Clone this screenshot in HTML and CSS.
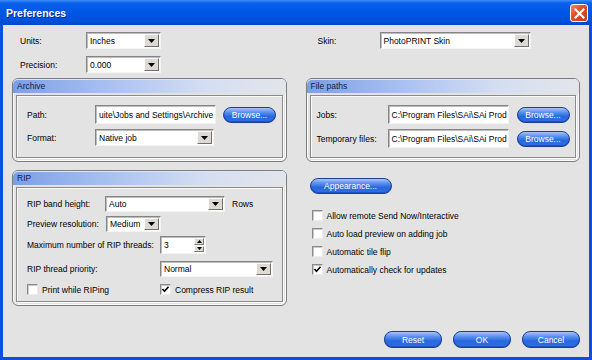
FILE: index.html
```html
<!DOCTYPE html>
<html lang="en">
<head>
	<meta charset="UTF-8">
	<title>Preferences</title>
<link rel="stylesheet" href="styles.css">
</head>
<body>
	<div class="window">
		<header class="titlebar">
			<span class="title">Preferences</span>
			<span class="close">
				<svg width="11" height="11" viewBox="0 0 11 11"><path d="M1.5 1.5 L9.5 9.5 M9.5 1.5 L1.5 9.5" stroke="#fff" stroke-width="2.2" stroke-linecap="square"/></svg>
			</span>
		</header>
		<main class="body">
			<section class="top">
				<div class="field">
					<span class="lbl">Units:</span>
					<div class="combo w-units"><span class="val">Inches</span><span class="arrow"><svg width="7" height="4" viewBox="0 0 7 4"><path d="M0 0 H7 L3.5 4 Z"/></svg></span></div>
				</div>
				<div class="field skin">
					<span class="lbl">Skin:</span>
					<div class="combo w-skin"><span class="val">PhotoPRINT Skin</span><span class="arrow"><svg width="7" height="4" viewBox="0 0 7 4"><path d="M0 0 H7 L3.5 4 Z"/></svg></span></div>
				</div>
				<div class="field">
					<span class="lbl">Precision:</span>
					<div class="combo w-units"><span class="val">0.000</span><span class="arrow"><svg width="7" height="4" viewBox="0 0 7 4"><path d="M0 0 H7 L3.5 4 Z"/></svg></span></div>
				</div>
			</section>

			<section class="pair groups">
				<div class="group">
					<div class="group-head">Archive</div>
					<div class="group-body archive">
						<div class="row">
							<span class="lbl-archive">Path:</span>
							<div class="txt w-path">uite\Jobs and Settings\Archive</div>
							<button class="pill w-browse">Browse...</button>
						</div>
						<div class="row">
							<span class="lbl-archive">Format:</span>
							<div class="combo w-format"><span class="val">Native job</span><span class="arrow"><svg width="7" height="4" viewBox="0 0 7 4"><path d="M0 0 H7 L3.5 4 Z"/></svg></span></div>
						</div>
					</div>
				</div>
				<div class="group">
					<div class="group-head">File paths</div>
					<div class="group-body paths">
						<div class="row">
							<span class="lbl-paths">Jobs:</span>
							<div class="txt w-path">C:\Program Files\SAi\SAi Prod</div>
							<button class="pill w-browse">Browse...</button>
						</div>
						<div class="row">
							<span class="lbl-paths">Temporary files:</span>
							<div class="txt w-path">C:\Program Files\SAi\SAi Prod</div>
							<button class="pill w-browse">Browse...</button>
						</div>
					</div>
				</div>
			</section>

			<section class="pair lower">
				<div class="group">
					<div class="group-head">RIP</div>
					<div class="group-body rip">
						<div class="row">
							<span class="lbl-band">RIP band height:</span>
							<div class="combo w-band"><span class="val">Auto</span><span class="arrow"><svg width="7" height="4" viewBox="0 0 7 4"><path d="M0 0 H7 L3.5 4 Z"/></svg></span></div>
							<span class="unit">Rows</span>
						</div>
						<div class="row">
							<span class="lbl-preview">Preview resolution:</span>
							<div class="combo w-preview"><span class="val">Medium</span><span class="arrow"><svg width="7" height="4" viewBox="0 0 7 4"><path d="M0 0 H7 L3.5 4 Z"/></svg></span></div>
						</div>
						<div class="row">
							<span class="lbl-wide">Maximum number of RIP threads:</span>
							<div class="spin">
								<span class="val">3</span>
								<span class="spin-btns">
									<span class="spin-btn"><svg width="5" height="3" viewBox="0 0 5 3"><path d="M0 3 H5 L2.5 0 Z"/></svg></span>
									<span class="spin-btn"><svg width="5" height="3" viewBox="0 0 5 3"><path d="M0 0 H5 L2.5 3 Z"/></svg></span>
								</span>
							</div>
						</div>
						<div class="row spaced">
							<span class="lbl-wide">RIP thread priority:</span>
							<div class="combo w-priority"><span class="val">Normal</span><span class="arrow"><svg width="7" height="4" viewBox="0 0 7 4"><path d="M0 0 H7 L3.5 4 Z"/></svg></span></div>
						</div>
						<div class="row spaced">
							<label class="check lbl-wide"><span class="cb"></span>Print while RIPing</label>
							<label class="check"><span class="cb"><svg width="9" height="9" viewBox="0 0 9 9"><path d="M1.5 4 L3.5 6.3 L7.5 1.8" fill="none" stroke="#000" stroke-width="1.6"/></svg></span>Compress RIP result</label>
						</div>
					</div>
				</div>
				<div class="side">
					<button class="pill w-appearance">Appearance...</button>
					<ul class="options">
						<li><label class="check"><span class="cb"></span>Allow remote Send Now/Interactive</label></li>
						<li><label class="check"><span class="cb"></span>Auto load preview on adding job</label></li>
						<li><label class="check"><span class="cb"></span>Automatic tile flip</label></li>
						<li><label class="check"><span class="cb"><svg width="9" height="9" viewBox="0 0 9 9"><path d="M1.5 4 L3.5 6.3 L7.5 1.8" fill="none" stroke="#000" stroke-width="1.6"/></svg></span>Automatically check for updates</label></li>
					</ul>
				</div>
			</section>

			<footer class="footer">
				<button class="pill w-action">Reset</button>
				<button class="pill w-action">OK</button>
				<button class="pill w-action">Cancel</button>
			</footer>
		</main>
	</div>
</body>
</html>
```

FILE: styles.css
```css
body{
	margin: 0;
	font: 8.5px "Liberation Sans", Arial, sans-serif;
	color: #000;
}
*{
	box-sizing: border-box;
}
.window{
	width: 592px;
	height: 360px;
	display: flex;
	flex-direction: column;
	background: #0b4fdf;
}
.titlebar{
	height: 25px;
	display: flex;
	align-items: center;
	justify-content: space-between;
	padding: 0 4px 0 6px;
	background: linear-gradient(#3d8ff7 0, #0a60ea 3px, #0057e5 45%, #0052dd 80%, #0046cc 100%);
	color: #fff;
}
.title{
	font-weight: bold;
	font-size: 10.5px;
	text-shadow: 1px 1px 0 #0a2a8a;
	padding-top: 1px;
}
.close{
	width: 18px;
	height: 18px;
	display: flex;
	align-items: center;
	justify-content: center;
	border: 1px solid #fff;
	border-radius: 3px;
	background: linear-gradient(135deg, #f08a6a 0%, #e0502b 40%, #c63a18 100%);
	margin-top: 1px;
}
.body{
	flex: 1;
	margin: 0 3px 3px;
	background: #e3e3e3;
	display: flex;
	flex-direction: column;
	padding: 7px 9px 9px;
}

/* top rows */
.top{
	display: grid;
	grid-template-columns: 1fr 1fr;
	column-gap: 19px;
	row-gap: 7px;
}
.field{
	display: flex;
	align-items: center;
}
.lbl{
	width: 74px;
	padding-left: 8px;
}
.skin .lbl{
	padding-left: 12px;
}

/* combos and text fields */
.combo, .txt, .spin{
	display: flex;
	background: #fff;
	border: 1px solid;
	border-color: #858585 #f4f4f4 #f4f4f4 #858585;
	box-shadow: inset 1px 1px 0 #bdbdbd;
}
.combo{
	height: 17px;
}
.rip .combo{
	height: 16px;
}
.combo .val, .spin .val{
	flex: 1;
	display: flex;
	align-items: center;
	padding-left: 3px;
	white-space: nowrap;
	overflow: hidden;
}
.arrow{
	width: 15px;
	margin: 1px;
	display: flex;
	align-items: center;
	justify-content: center;
	background: #dcdad3;
	border: 1px solid;
	border-color: #fafafa #6f6f6f #6f6f6f #fafafa;
}
.txt{
	height: 19px;
	align-items: center;
	padding-left: 3px;
	white-space: nowrap;
	overflow: hidden;
}
.w-units{ width: 75px; }
.w-skin{ width: 151px; }
.w-path{ width: 121px; }
.w-format{ width: 119px; }
.w-band{ width: 120px; }
.w-preview{ width: 55px; }
.w-priority{ width: 113px; }

/* blue pill buttons */
.pill{
	height: 16px;
	padding: 0;
	font: inherit;
	color: #fff;
	border: 1px solid #1c3f94;
	border-radius: 8px;
	background: linear-gradient(#a8c5f6 0%, #5b91ee 30%, #2a67df 60%, #2f6fe6 100%);
	box-shadow: inset 0 -1px 0 #1d52c4;
}
.w-browse{ width: 53px; }
.w-appearance{ width: 82px; }
.w-action{ width: 58px; height: 17px; }

/* group boxes */
.pair{
	display: grid;
	grid-template-columns: 1fr 1fr;
	column-gap: 19px;
}
.groups{
	margin-top: 5px;
}
.lower{
	margin-top: 8px;
}
.group{
	display: flex;
	flex-direction: column;
	border: 1px solid #7d7d7d;
	border-radius: 6px;
	box-shadow: inset 0 0 0 1px #fbfbfb;
	padding: 0 3px 3px;
}
.group-head{
	height: 14px;
	margin: 0 -3px;
	padding-left: 4px;
	line-height: 14px;
	border-radius: 5px 5px 0 0;
	color: #10204a;
	background: linear-gradient(to right, #7b9fe6 0%, #a9c1f0 35%, #d4def2 70%, #e3e5ea 100%);
	box-shadow: inset 0 1px 0 #dbe6fb;
}
.group-body{
	flex: 1;
	margin-top: 2px;
	border: 1px solid #8a8a8a;
	box-shadow: 1px 1px 0 #fbfbfb, inset 1px 1px 0 #fbfbfb;
	display: flex;
	flex-direction: column;
	gap: 5px;
}
.row{
	display: flex;
	align-items: center;
}
.archive{
	padding: 9px 0 11px 10px;
}
.archive .w-browse{
	margin-left: 7px;
}
.lbl-archive{
	width: 68px;
}
.paths{
	padding: 9px 0 9px 6px;
}
.paths .w-browse{
	margin-left: 8px;
}
.lbl-paths{
	width: 71px;
}
.rip{
	padding: 8px 0 6px 10px;
	gap: 4px;
}
.rip .spaced{
	margin-top: 3px;
}
.lbl-band{
	width: 78px;
}
.lbl-preview{
	width: 79px;
}
.lbl-wide{
	width: 133px;
}
.unit{
	margin-left: 7px;
}
.spin{
	width: 46px;
	height: 18px;
}
.spin-btns{
	width: 11px;
	display: flex;
	flex-direction: column;
	padding: 1px 1px 1px 0;
	gap: 1px;
}
.spin-btn{
	flex: 1;
	display: flex;
	align-items: center;
	justify-content: center;
	background: #dcdad3;
	border: 1px solid;
	border-color: #fafafa #7a7a7a #7a7a7a #fafafa;
}

/* checkboxes */
.check{
	display: flex;
	align-items: center;
	gap: 4px;
	height: 11px;
}
.cb{
	width: 11px;
	height: 11px;
	display: flex;
	align-items: center;
	justify-content: center;
	background: #fff;
	border: 1px solid;
	border-color: #8a8a8a #ececec #ececec #8a8a8a;
	box-shadow: inset 1px 1px 0 #c8c8c8;
}

/* right side of lower section */
.side{
	padding: 8px 0 0 4px;
}
.options{
	list-style: none;
	margin: 16px 0 0;
	padding: 0 0 0 2px;
	display: flex;
	flex-direction: column;
	gap: 7px;
}

.footer{
	margin-top: auto;
	display: flex;
	justify-content: flex-end;
	gap: 11px;
}
```
